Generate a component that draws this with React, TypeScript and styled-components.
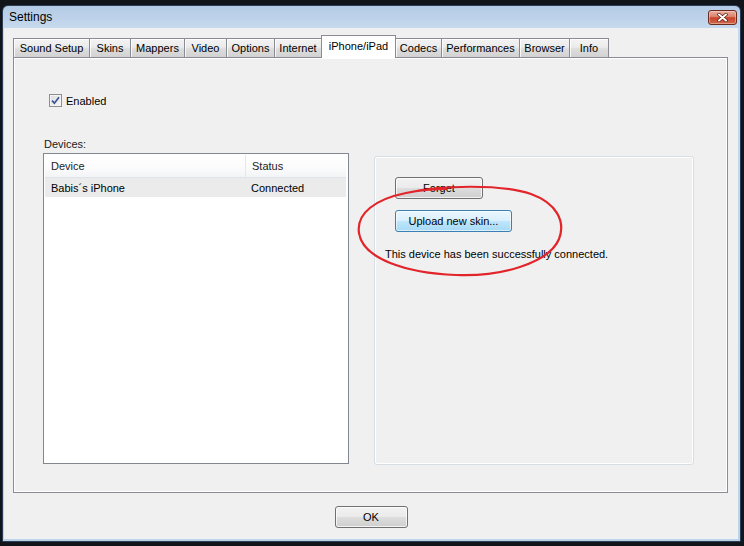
import React from 'react';
import styled, { createGlobalStyle, css } from 'styled-components';

const GlobalStyle = createGlobalStyle`
  html, body {
    margin: 0;
    background: #111418;
  }
  body {
    font-family: "Liberation Sans", Arial, sans-serif;
    font-size: 11px;
    color: #000;
  }
`;

const Desktop = styled.div`
  width: 744px;
  height: 546px;
  box-sizing: border-box;
  padding: 5px 3px 4px 2px;
  background: #111418;
  overflow: hidden;
  display: flex;
`;

const Window = styled.div`
  flex: 1;
  display: flex;
  flex-direction: column;
  border: 1px solid #2a3d55;
  border-radius: 6px 6px 0 0;
  padding: 0 2px 2px 1px;
  background: linear-gradient(#b3cbe5, #c6d9ee 22px, #bcd3ea);
`;

const TitleBar = styled.div`
  height: 22px;
  display: flex;
  align-items: center;
  padding: 0 1px 0 5px;
`;

const Title = styled.span`
  font-size: 12px;
  color: #000;
`;

const CloseButton = styled.div`
  margin-left: auto;
  width: 27px;
  height: 13px;
  display: flex;
  align-items: center;
  justify-content: center;
  border: 1px solid #6b2a1e;
  border-radius: 3px;
  background: linear-gradient(#eab0a2, #dc8069 45%, #c7432a 52%, #d0684a);
  box-shadow: inset 0 0 0 1px rgba(255, 220, 210, 0.45);
`;

const Client = styled.div`
  flex: 1;
  background: #f0f0f0;
  display: flex;
  flex-direction: column;
  padding: 7px 0 0 9px;
`;

const TabStrip = styled.div`
  height: 22px;
  display: flex;
  align-items: flex-end;
  position: relative;
  z-index: 1;
`;

const Tab = styled.div<{ $width: number; $active?: boolean }>`
  width: ${p => p.$width}px;
  box-sizing: border-box;
  height: 19px;
  margin-left: -1px;
  display: flex;
  align-items: center;
  justify-content: center;
  border: 1px solid #898c95;
  border-bottom: none;
  background: linear-gradient(#f3f3f3, #ebebeb 45%, #dddddd 55%, #d2d2d2);
  box-shadow: inset 1px 1px 0 rgba(255, 255, 255, 0.8);
  white-space: nowrap;
  &:first-child {
    margin-left: 0;
  }
  ${p => p.$active && css`
    height: 23px;
    margin-bottom: -1px;
    background: #fff;
    box-shadow: none;
    position: relative;
    z-index: 2;
    padding-bottom: 2px;
  `}
`;

const TabPanel = styled.div`
  width: 715px;
  height: 436px;
  box-sizing: border-box;
  border: 1px solid #898c95;
  box-shadow: inset 1px 1px 0 #fff, inset -1px -1px 0 #fff;
  background: #f0f0f0;
  padding: 0 33px 0 29px;
`;

const CheckRow = styled.label`
  display: flex;
  align-items: center;
  gap: 4px;
  margin: 36px 0 0 6px;
  height: 13px;
`;

const CheckBox = styled.span`
  width: 13px;
  height: 13px;
  box-sizing: border-box;
  border: 1px solid #8e8f8f;
  background: linear-gradient(135deg, #dcdcdc, #f9f9f9);
  box-shadow: inset 0 0 0 1px #f4f4f4;
  display: flex;
  align-items: center;
  justify-content: center;
`;

const Columns = styled.div`
  display: grid;
  grid-template-columns: 306px 320px;
  column-gap: 25px;
  margin-top: 31px;
  align-items: start;
`;

const FieldLabel = styled.div`
  line-height: 13px;
  margin: 0 0 2px 1px;
  color: #1a1a1a;
`;

const ListView = styled.div`
  height: 311px;
  box-sizing: border-box;
  border: 1px solid #828790;
  background: #fff;
  padding: 1px 2px 1px 1px;
`;

const ListRow = styled.div<{ $header?: boolean; $selected?: boolean }>`
  display: grid;
  grid-template-columns: 200px 1fr;
  height: 19px;
  align-items: center;
  ${p => p.$header && css`
    height: 22px;
    border-bottom: 1px solid #e0e3e7;
    background: linear-gradient(#fff, #fbfbfc 60%, #f3f4f6);
    color: #222;
  `}
  ${p => p.$selected && css`
    background: #ebebeb;
  `}
`;

const ListCell = styled.div<{ $divider?: boolean }>`
  padding-left: 6px;
  height: 100%;
  display: flex;
  align-items: center;
  ${p => p.$divider && css`
    border-left: 1px solid #e3e6ea;
  `}
`;

const GroupBox = styled.div`
  position: relative;
  margin-top: 18px;
  height: 309px;
  box-sizing: border-box;
  border: 1px solid #d5dfe5;
  border-radius: 3px;
  box-shadow: inset 0 0 0 1px #fff;
  display: flex;
  flex-direction: column;
  align-items: flex-start;
  padding: 20px 0 0 10px;
`;

const Button = styled.div<{ $width: number; $focused?: boolean }>`
  width: ${p => p.$width}px;
  height: 22px;
  box-sizing: border-box;
  display: flex;
  align-items: center;
  justify-content: center;
  border: 1px solid #707070;
  border-radius: 3px;
  background: linear-gradient(#f2f2f2, #ebebeb 48%, #dddddd 52%, #cfcfcf);
  box-shadow: inset 0 0 0 1px rgba(255, 255, 255, 0.75);
  ${p => p.$focused && css`
    border-color: #3c7fb1;
    background: linear-gradient(#eaf6fd, #d9f0fc 48%, #bee6fd 52%, #a7d9f5);
    box-shadow: inset 0 0 0 1px rgba(255, 255, 255, 0.6);
  `}
`;

const GroupButton = styled(Button)`
  margin-left: 10px;
  & + & {
    margin-top: 11px;
  }
`;

const StatusText = styled.div`
  margin-top: 16px;
  line-height: 13px;
`;

const Annotation = styled.svg`
  position: absolute;
  left: -24px;
  top: 24px;
  width: 220px;
  height: 100px;
  overflow: visible;
  pointer-events: none;
`;

const Footer = styled.div`
  display: flex;
  justify-content: center;
  padding: 13px 0 0 0;
  margin-left: -9px;
`;

const tabs = [
  { label: 'Sound Setup', width: 77 },
  { label: 'Skins', width: 42 },
  { label: 'Mappers', width: 55 },
  { label: 'Video', width: 43 },
  { label: 'Options', width: 49 },
  { label: 'Internet', width: 48 },
  { label: 'iPhone/iPad', width: 75, active: true },
  { label: 'Codecs', width: 47 },
  { label: 'Performances', width: 79 },
  { label: 'Browser', width: 51 },
  { label: 'Info', width: 40 },
];

const devices = [{ name: 'Babis´s iPhone', status: 'Connected' }];

export default function App() {
  return (
    <>
      <GlobalStyle />
      <Desktop>
        <Window>
          <TitleBar>
            <Title>Settings</Title>
            <CloseButton>
              <svg width="11" height="9" viewBox="0 0 11 9">
                <path d="M2 1.5 L9 7.5 M9 1.5 L2 7.5" stroke="#5a1a10" strokeWidth="3.4" strokeLinecap="round" />
                <path d="M2 1.5 L9 7.5 M9 1.5 L2 7.5" stroke="#fff" strokeWidth="2" strokeLinecap="round" />
              </svg>
            </CloseButton>
          </TitleBar>
          <Client>
            <TabStrip>
              {tabs.map(t => (
                <Tab key={t.label} $width={t.width} $active={t.active}>{t.label}</Tab>
              ))}
            </TabStrip>
            <TabPanel>
              <CheckRow>
                <CheckBox>
                  <svg width="9" height="9" viewBox="0 0 9 9">
                    <path d="M1 4.6 L3.4 7.2 L8 1.2" fill="none" stroke="#3b5596" strokeWidth="1.7" />
                  </svg>
                </CheckBox>
                Enabled
              </CheckRow>
              <Columns>
                <div>
                  <FieldLabel>Devices:</FieldLabel>
                  <ListView>
                    <ListRow $header>
                      <ListCell>Device</ListCell>
                      <ListCell $divider>Status</ListCell>
                    </ListRow>
                    {devices.map(d => (
                      <ListRow key={d.name} $selected>
                        <ListCell>{d.name}</ListCell>
                        <ListCell>{d.status}</ListCell>
                      </ListRow>
                    ))}
                  </ListView>
                </div>
                <GroupBox>
                  <GroupButton $width={88}>Forget</GroupButton>
                  <GroupButton $width={117} $focused>Upload new skin...</GroupButton>
                  <StatusText>This device has been successfully connected.</StatusText>
                  <Annotation viewBox="350 180 220 100">
                    <path
                      d="M 405 192 C 440 184, 500 183, 530 193 C 555 202, 565 220, 558 238 C 548 262, 500 276, 455 274 C 405 272, 362 258, 358 232 C 355 212, 375 198, 405 192 C 420 189, 432 188, 445 188"
                      fill="none"
                      stroke="#e2252b"
                      strokeWidth="2.2"
                      strokeLinecap="round"
                    />
                  </Annotation>
                </GroupBox>
              </Columns>
            </TabPanel>
            <Footer>
              <Button $width={73}>OK</Button>
            </Footer>
          </Client>
        </Window>
      </Desktop>
    </>
  );
}
